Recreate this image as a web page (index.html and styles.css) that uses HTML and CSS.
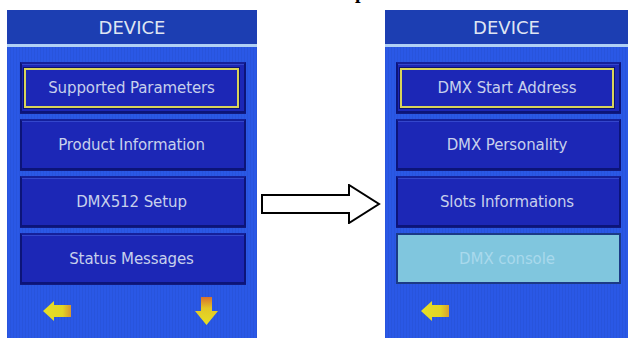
FILE: index.html
```html
<!DOCTYPE html>
<html lang="en">
<head>
    <meta charset="UTF-8">
    <title>Device menu</title>
    <link rel="stylesheet" href="styles.css">
</head>
<body>
    <!-- cut off caption above the picture -->
    <div class="caption"><span>p</span></div>

    <div class="stage">
        <!-- first screen: device menu -->
        <section class="screen screen-left">
            <div class="screen-title">DEVICE</div>
            <div class="menu">
                <div class="item selected"><span class="label">Supported Parameters</span></div>
                <div class="item"><span class="label">Product Information</span></div>
                <div class="item"><span class="label">DMX512 Setup</span></div>
                <div class="item"><span class="label">Status Messages</span></div>
            </div>
            <div class="nav">
                <svg class="arrow-left" width="28" height="20" viewBox="0 0 28 20">
                    <defs>
                        <linearGradient id="gl1" x1="0" y1="0" x2="1" y2="0">
                            <stop offset="0" stop-color="#e6e026"/>
                            <stop offset="0.7" stop-color="#e2d424"/>
                            <stop offset="1" stop-color="#d89430"/>
                        </linearGradient>
                    </defs>
                    <polygon points="0,10 11,0 11,4 28,4 28,16 11,16 11,20" fill="url(#gl1)"/>
                </svg>
                <svg class="arrow-down" width="23" height="28" viewBox="0 0 23 28">
                    <defs>
                        <linearGradient id="gd1" x1="0" y1="0" x2="0" y2="1">
                            <stop offset="0" stop-color="#d8702e"/>
                            <stop offset="0.4" stop-color="#e2c626"/>
                            <stop offset="1" stop-color="#e6e024"/>
                        </linearGradient>
                    </defs>
                    <polygon points="6,0 17,0 17,14 23,14 11.5,28 0,14 6,14" fill="url(#gd1)"/>
                </svg>
            </div>
        </section>

        <!-- transition arrow -->
        <div class="flow">
            <svg width="120" height="40" viewBox="0 0 120 40">
                <polygon points="1,11 88,11 88,1 118,20 88,39 88,29 1,29" fill="#fff" stroke="#000" stroke-width="2"/>
            </svg>
        </div>

        <!-- second screen: DMX submenu -->
        <section class="screen screen-right">
            <div class="screen-title">DEVICE</div>
            <div class="menu">
                <div class="item selected"><span class="label">DMX Start Address</span></div>
                <div class="item"><span class="label">DMX Personality</span></div>
                <div class="item"><span class="label">Slots Informations</span></div>
                <div class="item disabled"><span class="label">DMX console</span></div>
            </div>
            <div class="nav">
                <svg class="arrow-left" width="28" height="20" viewBox="0 0 28 20">
                    <defs>
                        <linearGradient id="gl2" x1="0" y1="0" x2="1" y2="0">
                            <stop offset="0" stop-color="#e6e026"/>
                            <stop offset="0.7" stop-color="#e2d424"/>
                            <stop offset="1" stop-color="#d8a030"/>
                        </linearGradient>
                    </defs>
                    <polygon points="0,10 11,0 11,4 28,4 28,16 11,16 11,20" fill="url(#gl2)"/>
                </svg>
            </div>
        </section>
    </div>
</body>
</html>
```

FILE: styles.css
```css
/* page */
html, body {
    margin: 0;
    padding: 0;
    background: #fff;
    overflow: hidden;
}

.caption {
    height: 10px;
    overflow: hidden;
    padding-left: 355px;
    font-family: "Liberation Serif", serif;
    font-weight: bold;
    font-size: 20px;
    line-height: 20px;
}
.caption span {
    display: block;
    margin-top: -19px;
}

.stage {
    display: flex;
    height: 328px;
}

/* screens */
.screen {
    display: flex;
    flex-direction: column;
    background-color: #2a58e6;
    background-image: repeating-linear-gradient(90deg, rgba(0, 0, 40, 0.05) 0 1px, transparent 1px 3px);
    font-family: "DejaVu Sans", sans-serif;
}
.screen-left {
    width: 250px;
    margin-left: 7px;
}
.screen-right {
    width: 243px;
}

.screen-title {
    height: 34px;
    line-height: 35px;
    text-align: center;
    background: #1c3eb2;
    color: #dfe5f2;
    font-size: 18px;
    border-bottom: 3px solid #b0d0f4;
}

/* menu buttons */
.menu {
    display: flex;
    flex-direction: column;
    gap: 6px;
    padding-top: 15px;
}
.screen-left .menu {
    padding-left: 13px;
    width: 226px;
}
.screen-right .menu {
    padding-left: 11px;
    width: 225px;
}

.item {
    height: 51px;
    box-sizing: border-box;
    display: flex;
    padding: 4px 5px 3px 2px;
    background: #1c27b6;
    border: 2px solid #0c1479;
    border-top-color: #15209a;
    box-shadow: inset 0 1px 0 #3446cc, 0 1px 0 #101a80;
}
.item .label {
    flex: 1;
    display: flex;
    align-items: center;
    justify-content: center;
    border: 2px solid transparent;
    color: #c7d0ec;
    font-size: 15px;
    letter-spacing: -0.1px;
}
.item.selected .label {
    border-color: #d8d45a;
    box-shadow: 0 0 0 1px #0b1270;
}
.item.disabled {
    background: #80c6de;
    border-color: #1b3a86;
    box-shadow: none;
}
.item.disabled .label {
    color: #a9d9ec;
}

/* bottom navigation arrows */
.nav {
    flex: 1;
    display: flex;
    align-items: center;
    justify-content: space-between;
    padding: 0 39px 0 36px;
}

/* transition arrow between the screens */
.flow {
    width: 124px;
    padding: 174px 0 0 4px;
}
.flow svg {
    display: block;
}
```
